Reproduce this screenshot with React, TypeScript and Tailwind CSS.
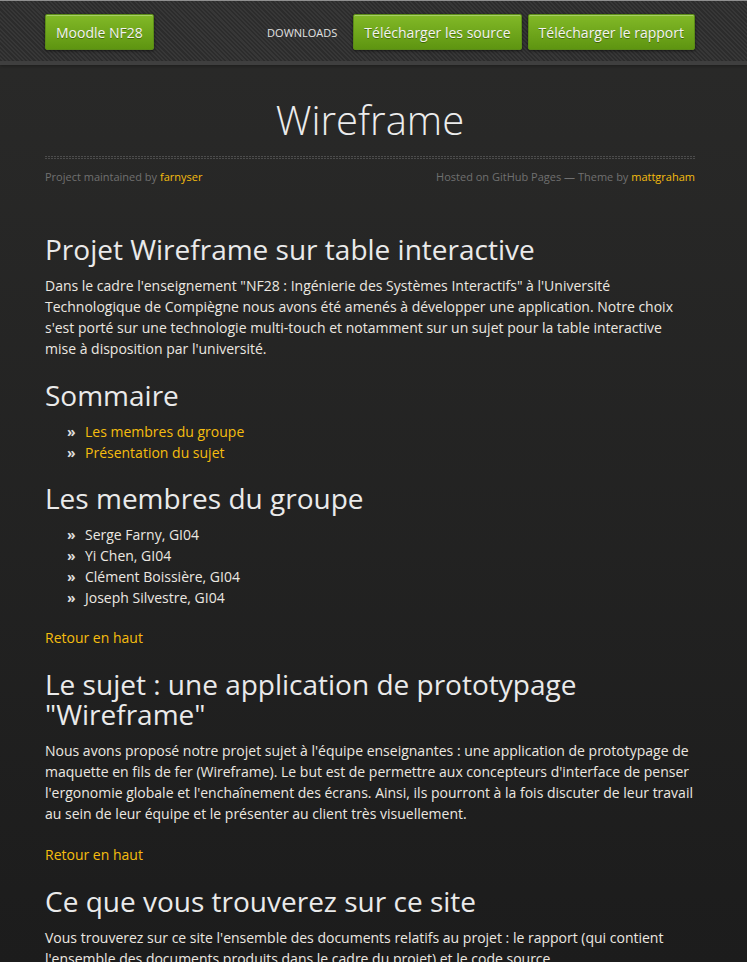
import React from "react";

const btn =
  "flex items-center h-[36px] px-[10px] rounded-[2px] border border-[#5b8c17] bg-[linear-gradient(#82b927,#5e9511)] text-[14px] text-[#f4f4f0] [text-shadow:0_1px_0_rgba(0,0,0,0.35)] shadow-[0_1px_3px_rgba(0,0,0,0.55),inset_0_1px_0_rgba(255,255,255,0.3)] whitespace-nowrap";

const link = "text-[#f5bd0f]";

function H({ children }: { children: React.ReactNode }) {
  return (
    <h1 className="text-[28px] leading-[30px] pt-[1px] mb-[11px] font-normal text-[#eaeaea]">
      {children}
    </h1>
  );
}

function Li({ children }: { children: React.ReactNode }) {
  return (
    <li className="flex pl-[22px]">
      <span className="w-[18px] font-bold text-[#dddddd]">»</span>
      <span>{children}</span>
    </li>
  );
}

export default function App() {
  return (
    <div className="h-screen overflow-hidden bg-[linear-gradient(#2a2a29,#1c1c1c)] font-['Open_Sans','Liberation_Sans',sans-serif] text-[14px] leading-[21px] text-[#ece8e1]">
      <header className="h-[65px] border-t border-t-[#8f8f8f] border-b-4 border-b-[#3f3f3f] bg-[image:repeating-linear-gradient(45deg,#2c2c2c_0px,#2c2c2c_1.5px,#373737_1.5px,#373737_3px)] shadow-[0_1px_3px_rgba(0,0,0,0.3)]">
        <div className="ml-[45px] w-[650px] flex items-start justify-between pt-[13px]">
          <a className={btn}>Moodle NF28</a>
          <div className="flex items-center">
            <span className="text-[11px] uppercase text-[#e2e2e2] mr-[16px]">Downloads</span>
            <a className={btn}>Télécharger les source</a>
            <a className={btn + " ml-[6px]"}>Télécharger le rapport</a>
          </div>
        </div>
      </header>

      <div className="ml-[45px] w-[650px]">
        <div className="mt-[25px] text-center text-[40px] leading-[60px] font-light text-[#ececec]">
          Wireframe
        </div>
        <div className="mt-[6px] flex flex-col gap-[1px]">
          <div className="h-px bg-[image:repeating-linear-gradient(90deg,#4c4c4c_0px,#4c4c4c_2px,transparent_2px,transparent_3px)]" />
          <div className="h-px bg-[image:repeating-linear-gradient(90deg,#4c4c4c_0px,#4c4c4c_2px,transparent_2px,transparent_3px)]" />
        </div>
        <div className="mt-[10px] flex justify-between text-[11px] leading-[16px] text-[#707070]">
          <span>
            Project maintained by <a className={link}>farnyser</a>
          </span>
          <span>
            Hosted on GitHub Pages — Theme by <a className={link}>mattgraham</a>
          </span>
        </div>

        <div className="mt-[48px]">
          <H>Projet Wireframe sur table interactive</H>
          <p className="mb-[20px] whitespace-nowrap">
            Dans le cadre l'enseignement "NF28 : Ingénierie des Systèmes Interactifs" à l'Université
            <br />
            Technologique de Compiègne nous avons été amenés à développer une application. Notre choix
            <br />
            s'est porté sur une technologie multi-touch et notamment sur un sujet pour la table interactive
            <br />
            mise à disposition par l'université.
          </p>

          <H>Sommaire</H>
          <ul className="mb-[19px]">
            <Li>
              <a className={link}>Les membres du groupe</a>
            </Li>
            <Li>
              <a className={link}>Présentation du sujet</a>
            </Li>
          </ul>

          <H>Les membres du groupe</H>
          <ul className="mb-[19px]">
            <Li>Serge Farny, GI04</Li>
            <Li>Yi Chen, GI04</Li>
            <Li>Clément Boissière, GI04</Li>
            <Li>Joseph Silvestre, GI04</Li>
          </ul>

          <p className="mb-[20px]">
            <a className={link}>Retour en haut</a>
          </p>

          <H>
            Le sujet : une application de prototypage
            <br />
            "Wireframe"
          </H>
          <p className="mb-[20px] whitespace-nowrap">
            Nous avons proposé notre projet sujet à l'équipe enseignantes : une application de prototypage de
            <br />
            maquette en fils de fer (Wireframe). Le but est de permettre aux concepteurs d'interface de penser
            <br />
            l'ergonomie globale et l'enchaînement des écrans. Ainsi, ils pourront à la fois discuter de leur travail
            <br />
            au sein de leur équipe et le présenter au client très visuellement.
          </p>

          <p className="mb-[20px]">
            <a className={link}>Retour en haut</a>
          </p>

          <H>Ce que vous trouverez sur ce site</H>
          <p className="mb-[20px] whitespace-nowrap">
            Vous trouverez sur ce site l'ensemble des documents relatifs au projet : le rapport (qui contient
            <br />
            l'ensemble des documents produits dans le cadre du projet) et le code source.
          </p>
        </div>
      </div>
    </div>
  );
}
